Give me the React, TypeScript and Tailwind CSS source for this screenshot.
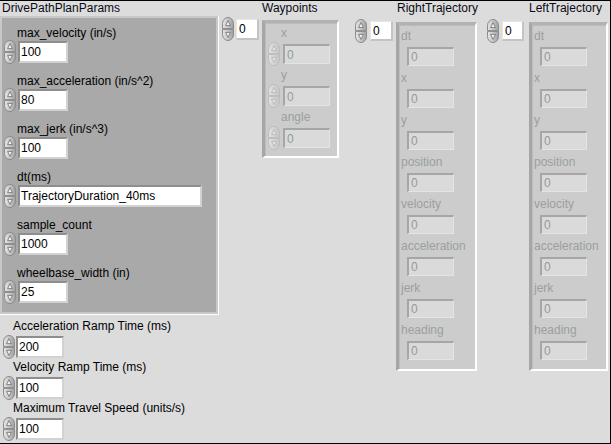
import React from "react";

// LabVIEW-style increment/decrement arrows
function Spinner({ disabled = false }: { disabled?: boolean }) {
  const id = disabled ? "spin-off" : "spin-on";
  const edge = disabled ? "#bdbdbd" : "#8a8a8a";
  const arrow = disabled ? "#b4b4b4" : "#6f6f6f";
  return (
    <svg width="12" height="24" viewBox="0 0 12 24" className="shrink-0">
      <defs>
        <linearGradient id={id} x1="0" y1="0" x2="1" y2="0">
          <stop offset="0" stopColor={disabled ? "#e2e2e2" : "#e6e6e6"} />
          <stop offset="0.5" stopColor={disabled ? "#d4d4d4" : "#c6c6c6"} />
          <stop offset="1" stopColor={disabled ? "#c4c4c4" : "#9e9e9e"} />
        </linearGradient>
      </defs>
      <path d="M0.5 11.6 V6.5 A5.5 6 0 0 1 11.5 6.5 V11.6 Z" fill={`url(#${id})`} stroke={edge} />
      <path d="M0.5 12.4 V17.5 A5.5 6 0 0 0 11.5 17.5 V12.4 Z" fill={`url(#${id})`} stroke={edge} />
      <path d="M6 3.6 L8.4 8.6 H3.6 Z" fill={disabled ? "#e6e6e6" : "#f2f2f2"} stroke={arrow} strokeWidth="0.8" />
      <path d="M6 20.4 L8.4 15.4 H3.6 Z" fill={disabled ? "#e6e6e6" : "#f2f2f2"} stroke={arrow} strokeWidth="0.8" />
    </svg>
  );
}

function NumBox({ value, className }: { value: string; className: string }) {
  return (
    <div
      className={`flex items-center overflow-hidden whitespace-nowrap border-2 border-t-[#8e8e8e] border-l-[#8e8e8e] border-r-[#d2d2d2] border-b-[#d2d2d2] bg-white pl-[1px] text-black ${className}`}
    >
      {value}
    </div>
  );
}

function IndexBox({ className }: { className: string }) {
  return (
    <div
      className={`flex items-center border-t border-l border-t-[#e6e6e6] border-l-[#e6e6e6] border-r-2 border-b-2 border-r-[#c4c4c4] border-b-[#c4c4c4] bg-white pl-[2px] text-black ${className}`}
    >
      0
    </div>
  );
}

function GrayBox({ className }: { className: string }) {
  return (
    <div
      className={`flex items-center border-t-2 border-l-2 border-t-[#a6a6a6] border-l-[#a6a6a6] border-r border-b border-r-[#e4e4e4] border-b-[#e4e4e4] bg-[#dadada] pl-[2px] text-[#939a9c] ${className}`}
    >
      0
    </div>
  );
}

const PARAMS = [
  { label: "max_velocity (in/s)", value: "100", w: "w-[50px]" },
  { label: "max_acceleration (in/s^2)", value: "80", w: "w-[50px]" },
  { label: "max_jerk (in/s^3)", value: "100", w: "w-[50px]" },
  { label: "dt(ms)", value: "TrajectoryDuration_40ms", w: "w-[184px]" },
  { label: "sample_count", value: "1000", w: "w-[50px]" },
  { label: "wheelbase_width (in)", value: "25", w: "w-[50px]" },
];

const RAMPS = [
  { label: "Acceleration Ramp Time (ms)", value: "200" },
  { label: "Velocity Ramp Time (ms)", value: "100" },
  { label: "Maximum Travel Speed (units/s)", value: "100" },
];

const TRAJ_FIELDS = [
  "dt",
  "x",
  "y",
  "position",
  "velocity",
  "acceleration",
  "jerk",
  "heading",
];

function TrajectoryFrame({ className }: { className: string }) {
  return (
    <div
      className={`flex flex-col gap-[5px] border-t-[3px] border-l-[3px] border-t-[#b2b2b2] border-l-[#a6a6a6] border-r-2 border-b-2 border-r-white border-b-white bg-[#cccccc] pt-[4px] shadow-[inset_1px_1px_0_#bcbcbc] ${className}`}
    >
      {TRAJ_FIELDS.map((f) => (
        <div key={f}>
          <div className="h-[14px] whitespace-nowrap pl-[2px] text-[#9a9fa1]">{f}</div>
          <GrayBox className="mt-[4px] ml-[8px] h-[19px] w-[47px]" />
        </div>
      ))}
    </div>
  );
}

export default function App() {
  return (
    <div className="flex h-[444px] w-[611px] overflow-hidden border-t border-r border-b border-black bg-[#dcdcdc] font-['Liberation_Sans',Arial,sans-serif] text-[12px] leading-[14px] text-black">
      {/* Left: params cluster + ramp controls */}
      <div className="flex w-[219px] shrink-0 flex-col">
        <div className="h-[15px] whitespace-nowrap pl-[2px] text-[#0a0a14]">DrivePathPlanParams</div>
        <div className="h-[299px] w-[219px] border-r border-b border-white bg-[#c8c8c8] p-[2px]">
          <div className="flex h-full flex-col gap-[11px] bg-[#a9a9a9] pt-[8px]">
            {PARAMS.map((p) => (
              <div key={p.label}>
                <div className="h-[14px] whitespace-nowrap pl-[15px]">{p.label}</div>
                <div className="mt-[1px] flex h-[22px] items-center pl-[2px]">
                  <Spinner />
                  <NumBox value={p.value} className={`ml-[2px] h-[22px] ${p.w}`} />
                </div>
              </div>
            ))}
          </div>
        </div>
        <div className="mt-[4px] flex flex-col gap-[2px]">
          {RAMPS.map((r) => (
            <div key={r.label}>
              <div className="h-[14px] whitespace-nowrap pl-[13px]">{r.label}</div>
              <div className="mt-[3px] flex h-[22px] items-center pl-[3px]">
                <Spinner />
                <NumBox value={r.value} className="ml-[1px] h-[22px] w-[48px]" />
              </div>
            </div>
          ))}
        </div>
      </div>

      {/* Waypoints array */}
      <div className="flex w-[134px] shrink-0 flex-col">
        <div className="h-[15px] whitespace-nowrap pl-[43px] text-[#0a0a14]">Waypoints</div>
        <div className="flex items-start">
          <div className="mt-[1px] flex items-center pl-[3px]">
            <Spinner />
            <IndexBox className="ml-[2px] h-[21px] w-[23px]" />
          </div>
          <div className="mt-[4px] ml-[3px] flex h-[138px] w-[77px] flex-col gap-[4px] border-t-[3px] border-l-[3px] border-t-[#b2b2b2] border-l-[#a6a6a6] border-r-2 border-b-2 border-r-white border-b-white bg-[#cccccc] pt-[3px] shadow-[inset_1px_1px_0_#bcbcbc]">
            {["x", "y", "angle"].map((f) => (
              <div key={f}>
                <div className="h-[14px] whitespace-nowrap pl-[16px] text-[#9a9fa1]">{f}</div>
                <div className="mt-[4px] flex h-[20px] items-center pl-[3px]">
                  <Spinner disabled />
                  <GrayBox className="ml-[3px] h-[20px] w-[47px]" />
                </div>
              </div>
            ))}
          </div>
        </div>
      </div>

      {/* RightTrajectory array */}
      <div className="flex w-[125px] shrink-0 flex-col">
        <div className="h-[15px] whitespace-nowrap pl-[44px] text-[#0a0a14]">RightTrajectory</div>
        <div className="flex items-start">
          <div className="mt-[3px] flex items-center pl-[2px]">
            <Spinner />
            <IndexBox className="ml-[3px] h-[20px] w-[23px]" />
          </div>
          <TrajectoryFrame className="mt-[6px] ml-[3px] h-[349px] w-[81px]" />
        </div>
      </div>

      {/* LeftTrajectory array */}
      <div className="flex flex-1 flex-col">
        <div className="h-[15px] whitespace-nowrap pl-[51px] text-[#0a0a14]">LeftTrajectory</div>
        <div className="flex items-start">
          <div className="mt-[3px] flex items-center pl-[9px]">
            <Spinner />
            <IndexBox className="ml-[3px] h-[20px] w-[22px]" />
          </div>
          <TrajectoryFrame className="mt-[6px] ml-[5px] h-[349px] w-[79px]" />
        </div>
      </div>
    </div>
  );
}
